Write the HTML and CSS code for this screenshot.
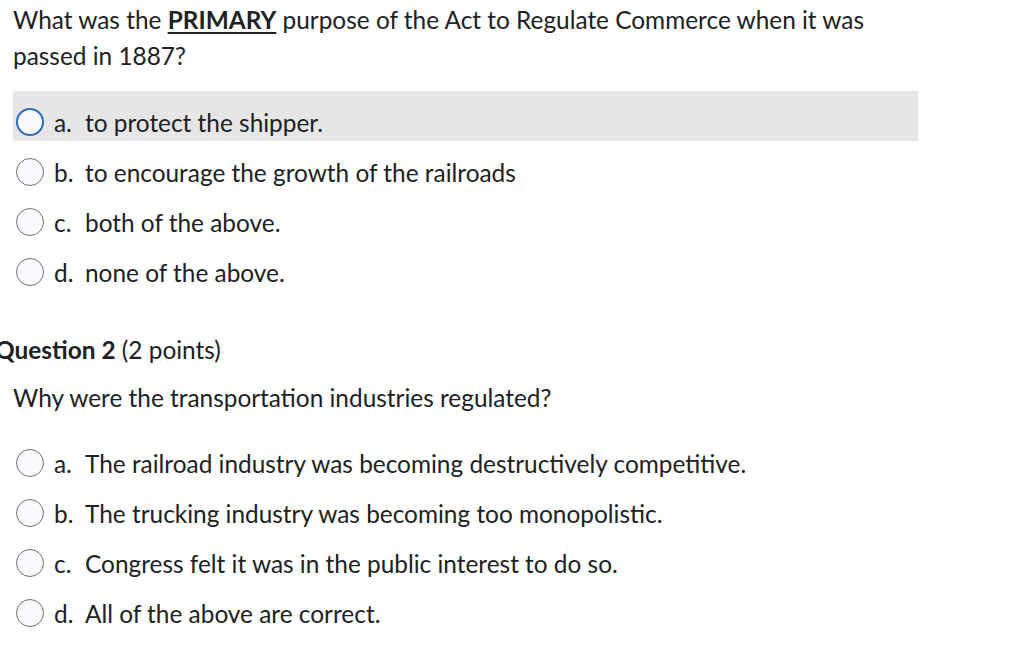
FILE: index.html
```html
<!DOCTYPE html>
<html>
<head>
<meta charset="utf-8">
<link rel="stylesheet" href="styles.css">
</head>
<body>
<div class="page">
  <section class="question q1">
    <p class="prompt">What was the <strong class="emph">PRIMARY</strong> purpose of the Act to Regulate Commerce when it was passed in 1887?</p>
    <ul class="options">
      <li class="option hover"><span class="radio focus"></span><span class="letter">a.</span><span class="text">to protect the shipper.</span></li>
      <li class="option"><span class="radio"></span><span class="letter">b.</span><span class="text">to encourage the growth of the railroads</span></li>
      <li class="option"><span class="radio"></span><span class="letter">c.</span><span class="text">both of the above.</span></li>
      <li class="option"><span class="radio"></span><span class="letter">d.</span><span class="text">none of the above.</span></li>
    </ul>
  </section>
  <section class="question q2">
    <h2 class="qtitle"><strong>Question 2</strong> (2 points)</h2>
    <p class="prompt">Why were the transportation industries regulated?</p>
    <ul class="options">
      <li class="option"><span class="radio"></span><span class="letter">a.</span><span class="text">The railroad industry was becoming destructively competitive.</span></li>
      <li class="option"><span class="radio"></span><span class="letter">b.</span><span class="text">The trucking industry was becoming too monopolistic.</span></li>
      <li class="option"><span class="radio"></span><span class="letter">c.</span><span class="text">Congress felt it was in the public interest to do so.</span></li>
      <li class="option"><span class="radio"></span><span class="letter">d.</span><span class="text">All of the above are correct.</span></li>
    </ul>
  </section>
</div>
</body>
</html>
```

FILE: styles.css
```css
* { box-sizing: border-box; }
html, body { margin: 0; padding: 0; background: #ffffff; }
body {
  font-family: Lato, "Noto Sans", sans-serif;
  font-size: 24.4px;
  color: #202122;
}
.page { display: flex; flex-direction: column; }
.question { display: flex; flex-direction: column; }
.prompt {
  margin: 0;
  padding: 2px 0 0 13px;
  line-height: 36px;
  max-width: 900px;
}
.emph { font-weight: 700; text-decoration: underline; text-underline-offset: 3px; text-decoration-thickness: 2px; }
.options {
  list-style: none;
  margin: 0;
  padding: 0 0 0 13px;
  display: flex;
  flex-direction: column;
}
.q1 .options { margin-top: 17px; }
.option {
  width: 905px;
  height: 50px;
  display: flex;
  align-items: center;
  padding: 12px 0 0 3px;
}
.option.hover { background: #e6e6e6; }
.radio {
  width: 28px;
  height: 28px;
  border-radius: 50%;
  border: 1px solid #707070;
  background: #f9fafd;
  flex: none;
}
.radio.focus { border: 2px solid #2b6cbd; }
.letter { margin-left: 10px; width: 31px; }
.q2 { margin-top: 35px; }
.qtitle {
  margin: 0 0 0 -5px;
  font-size: 24.4px;
  font-weight: 400;
  line-height: 48px;
}
.qtitle strong { font-weight: 700; }
.q2 .prompt { padding-top: 0; line-height: 48px; }
.q2 .options { margin-top: 10px; }
```
